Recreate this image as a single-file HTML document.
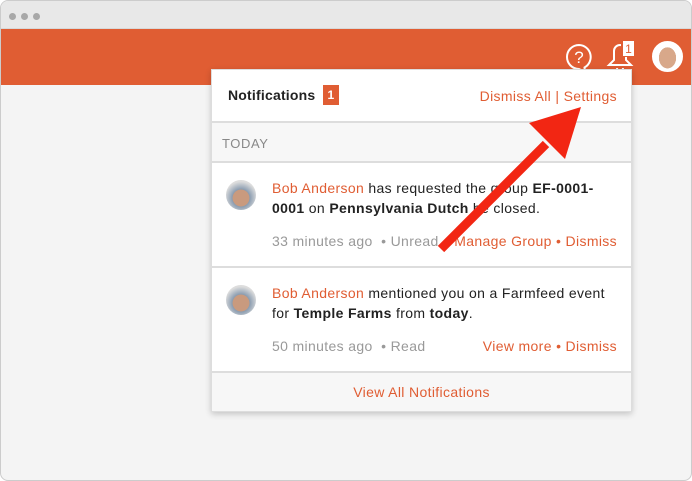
<!DOCTYPE html>
<html><head><style>
*{box-sizing:border-box;margin:0;padding:0}
body{width:692px;height:481px;background:#fff;font-family:"Liberation Sans",sans-serif;position:relative;overflow:hidden}
.win{position:absolute;left:0;top:0;width:692px;height:481px;border:1px solid #ccc;border-radius:8px;overflow:hidden;background:#f4f4f4}
.tb{height:28px;background:#e8e8e8;border-bottom:1px solid #d8d8d8;position:relative}
.dot{position:absolute;top:12px;width:7px;height:7px;border-radius:50%;background:#a8a8a8}
.bar{height:56px;background:#e05d33;position:relative}
.panel{position:absolute;left:210px;top:68px;width:421px;height:343px;background:#fff;border:1px solid #ddd;box-shadow:0 2px 6px rgba(0,0,0,.2);letter-spacing:.35px}
.o{color:#e05d33}
.hd{height:53px;border-bottom:2px solid #ddd;position:relative;font-size:14px}
.sec{height:40px;background:#f7f7f7;border-bottom:2px solid #ddd;color:#888;font-size:13px;padding:13px 0 0 10px;letter-spacing:.6px}
.item{position:relative;height:105px;border-bottom:2px solid #ddd;font-size:14px;color:#222}
.av{position:absolute;left:14px;top:17px;width:30px;height:30px;border-radius:50%;background:radial-gradient(circle at 50% 60%,#c99a7e 35%,#8a9cb0 37%,#ddd 70%)}
.txt{position:absolute;left:60px;top:15px;width:342px;line-height:20px}
.meta{position:absolute;left:60px;top:70px;right:14px;color:#999;font-size:14px}
.meta span.r{position:absolute;right:0;top:0}
b{font-weight:bold;color:#222}
</style></head><body>
<div class="win">
<div class="tb"><div class="dot" style="left:8px"></div><div class="dot" style="left:20px"></div><div class="dot" style="left:32px"></div></div>
<div class="bar">
<svg style="position:absolute;left:563px;top:13px" width="32" height="32" viewBox="0 0 32 32"><path d="M15 3a12 12 0 1 0 0 24l6 3-0.5-4.5A12 12 0 0 0 15 3z" fill="none" stroke="#fff" stroke-width="2"/><text x="15" y="21" font-size="17" fill="#fff" text-anchor="middle" font-family="Liberation Sans">?</text></svg>
<svg style="position:absolute;left:602px;top:10px" width="36" height="36" viewBox="0 0 36 36"><path d="M11 12a6 6 0 0 1 12 0v9l5 5H6l5-5z" fill="none" stroke="#fff" stroke-width="2"/><path d="M14 29a3 3 0 0 0 6 0" fill="none" stroke="#fff" stroke-width="2"/><rect x="18" y="1" width="13" height="17" fill="#e05d33"/><rect x="20" y="2" width="11" height="15" fill="#fff"/><text x="25.5" y="14" font-size="12" fill="#e05d33" text-anchor="middle" font-family="Liberation Sans">1</text></svg>
<div style="position:absolute;left:651px;top:12px;width:31px;height:31px;border-radius:50%;background:radial-gradient(ellipse 45% 55% at 50% 55%,#d8a88a 70%,#fff 72%),#fff;border:2px solid #fff"></div>
</div>
<div class="panel">
<div class="hd"><span style="position:absolute;left:16px;top:17px;color:#222;font-weight:bold;letter-spacing:.2px">Notifications</span><span style="position:absolute;left:111px;top:15px;background:#e05d33;color:#fff;font-size:12px;width:16px;height:20px;text-align:center;line-height:20px;font-weight:bold">1</span><span class="o" style="position:absolute;right:14px;top:18px">Dismiss All | Settings</span></div>
<div class="sec">TODAY</div>
<div class="item"><div class="av"></div><div class="txt"><span class="o">Bob Anderson</span> has requested the group <b>EF-0001-0001</b> on <b>Pennsylvania Dutch</b> be closed.</div><div class="meta">33 minutes ago &nbsp;• Unread<span class="r o">Manage Group • Dismiss</span></div></div>
<div class="item"><div class="av"></div><div class="txt"><span class="o">Bob Anderson</span> mentioned you on a Farmfeed event for <b>Temple Farms</b> from <b>today</b>.</div><div class="meta">50 minutes ago &nbsp;• Read<span class="r o">View more • Dismiss</span></div></div>
<div style="height:38px;background:#f7f7f7;text-align:center;padding-top:11px;font-size:14px" class="o">View All Notifications</div>
</div>
<svg style="position:absolute;left:0;top:0" width="692" height="481"><line x1="440" y1="248" x2="545" y2="143" stroke="#f22613" stroke-width="9"/><polygon points="580,106 528,122 564,158" fill="#f22613"/></svg>
</div>
</body></html>
